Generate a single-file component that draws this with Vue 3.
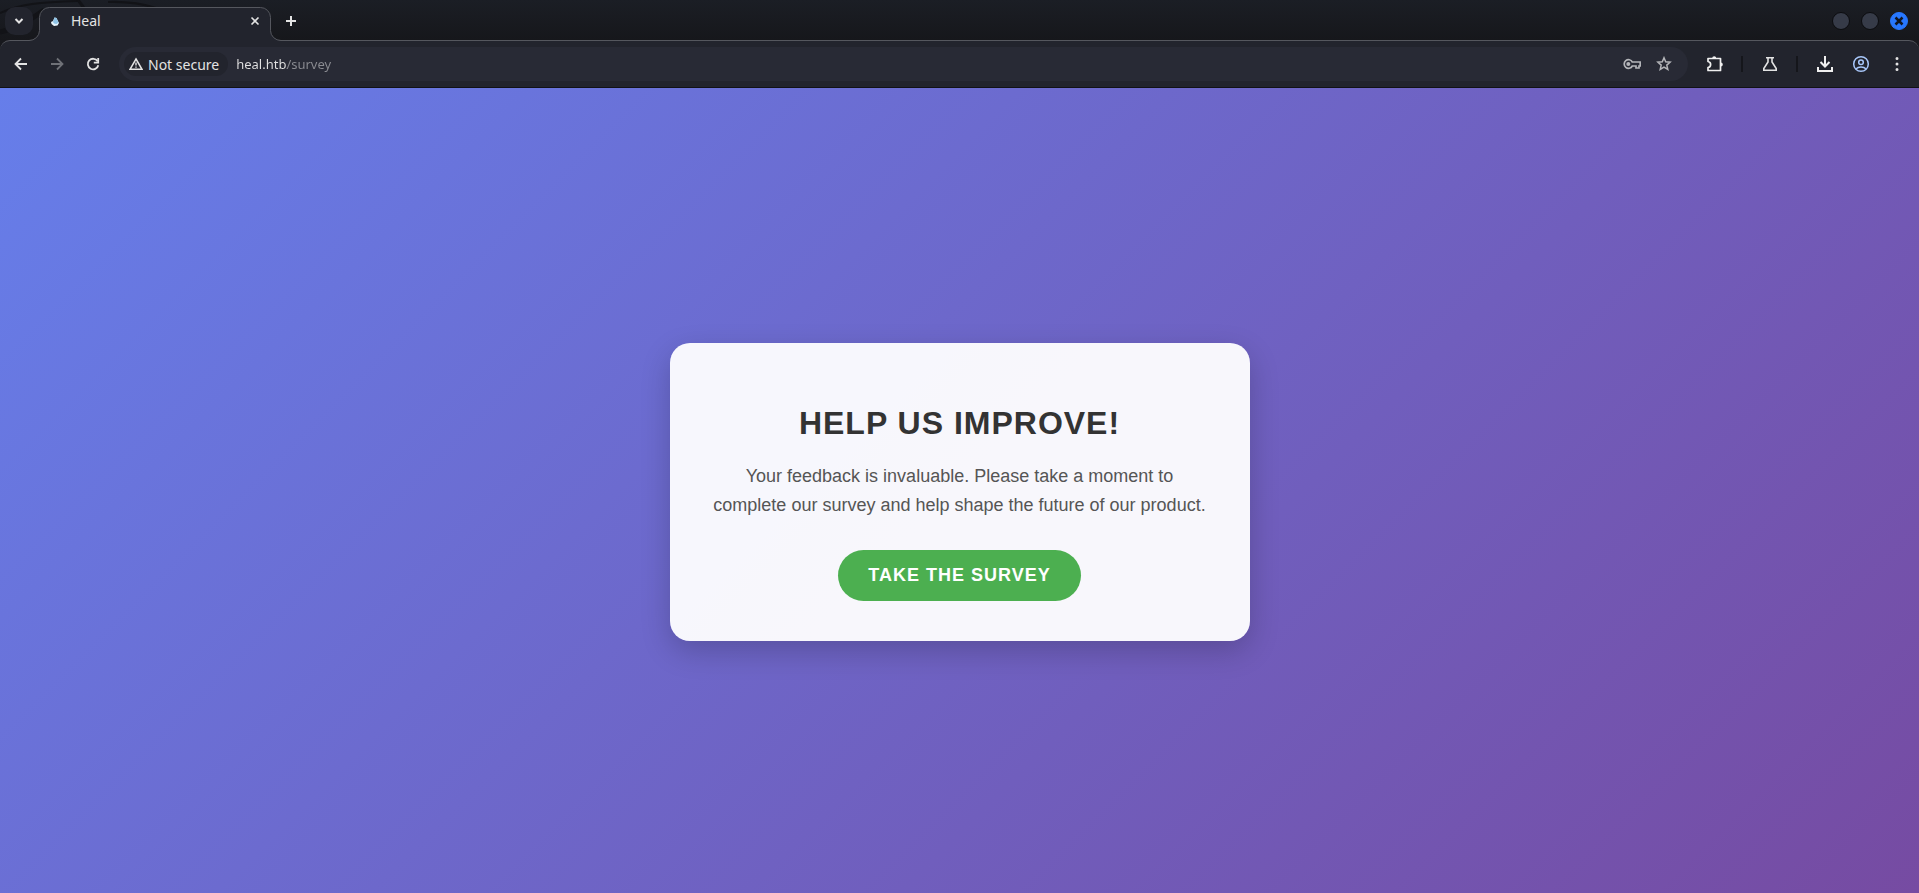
<script setup>
import { ref } from 'vue'

const url = ref('heal.htb/survey')
</script>

<template>
  <div class="window">
    <header class="titlebar">
      <svg class="pattern" width="180" height="40" viewBox="0 0 180 40" aria-hidden="true">
        <g fill="none" stroke="#121317">
          <path d="M0 32C18 28 30 20 44 10" stroke-width="5" />
          <path d="M0 13C20 4 40 2 78 1" stroke-width="2" />
          <path d="M78 0l6 8" stroke-width="3" />
          <path d="M108 2q26-1 48 6" stroke-width="2" />
        </g>
      </svg>
      <button class="tab-search" aria-label="Search tabs">
        <svg width="12" height="12" viewBox="0 0 12 12"><path d="M2.500 4l3.500 3.500L9.500 4" fill="none" stroke="#e3e3e3" stroke-width="2" /></svg>
      </button>
      <div class="tab">
        <svg class="tab-shape" width="252" height="34" viewBox="0 0 252 34" aria-hidden="true">
          <path d="M0 34V33.500A10.500 10 0 0 0 10.500 23.500V10.500A10 10 0 0 1 20.500 .5H231.500A10 10 0 0 1 241.500 10.500V23.500A10.500 10 0 0 0 252 33.500V34z" fill="#22242d" />
          <path d="M0 33.500A10.500 10 0 0 0 10.500 23.500V10.500A10 10 0 0 1 20.500 .5H231.500A10 10 0 0 1 241.500 10.500V23.500A10.500 10 0 0 0 252 33.500" fill="none" stroke="#55575e" />
        </svg>
        <svg class="favicon" width="16" height="16" viewBox="0 0 16 16" aria-hidden="true">
          <path d="M7.500 4.500L9.500 5l2.500 5-1.500 2.500L7 13l-2.500-2L4 9l2-1z" fill="#e6f4fc" />
          <path d="M7.500 4.500L9.500 5l2 4.500-2 1.500L7 10.500 6 9z" fill="#8fc3e6" />
        </svg>
        <span class="tab-title">Heal</span>
        <button class="icon-btn small" aria-label="Close tab">
          <svg width="10" height="10" viewBox="0 0 10 10"><path d="M1.500 1.500l7 7M8.500 1.500l-7 7" stroke="#e3e3e3" stroke-width="1.600" /></svg>
        </button>
      </div>
      <button class="icon-btn small" aria-label="New tab">
        <svg width="12" height="12" viewBox="0 0 12 12"><path d="M6 1v10M1 6h10" stroke="#e3e3e3" stroke-width="2" /></svg>
      </button>
      <div class="controls">
        <button class="control" aria-label="Minimize"></button>
        <button class="control" aria-label="Maximize"></button>
        <button class="control close" aria-label="Close">
          <svg width="10" height="10" viewBox="0 0 10 10"><path d="M1.500 1.500l7 7M8.500 1.500l-7 7" stroke="#11151f" stroke-width="2.500" /></svg>
        </button>
      </div>
    </header>

    <nav class="toolbar">
      <button class="icon-btn" aria-label="Back">
        <svg width="14" height="14" viewBox="0 0 14 14"><path d="M13 7H2M7 1.500L1.500 7 7 12.500" fill="none" stroke="#e3e3e3" stroke-width="1.800" /></svg>
      </button>
      <button class="icon-btn" aria-label="Forward">
        <svg width="14" height="14" viewBox="0 0 14 14"><path d="M1 7h11M7 1.500L12.500 7 7 12.500" fill="none" stroke="#6f7177" stroke-width="1.800" /></svg>
      </button>
      <button class="icon-btn" aria-label="Reload">
        <svg width="14" height="14" viewBox="0 0 14 14">
          <path d="M11.600 4.200A5.300 5.300 0 1 0 12.300 8.300" fill="none" stroke="#e3e3e3" stroke-width="1.800" />
          <path d="M12.200 1v4.600H7.800" fill="none" stroke="#e3e3e3" stroke-width="1.800" />
        </svg>
      </button>

      <div class="omnibox">
        <button class="chip">
          <svg width="14" height="14" viewBox="0 0 14 14">
            <path d="M7 2L13 12.300H1z" fill="none" stroke="#e3e3e3" stroke-width="1.500" />
            <path d="M7 5.500v3M7 9.500v1.300" stroke="#e3e3e3" stroke-width="1.400" />
          </svg>
          Not secure
        </button>
        <input v-model="url" class="address" type="text" aria-label="Address" />
        <button class="icon-btn" aria-label="Passwords">
          <svg width="18" height="12" viewBox="0 0 18 12">
            <path d="M9.300 4A4.300 4.300 0 1 0 9.300 8H13v2h3V8h1.200V4z" fill="none" stroke="#b4b5b9" stroke-width="1.700" />
            <circle cx="5.300" cy="6" r="2" fill="#b4b5b9" />
          </svg>
        </button>
        <button class="icon-btn" aria-label="Bookmark this page">
          <svg width="16" height="16" viewBox="0 0 16 16"><path d="M8 1.800l1.700 4 4.400.4-3.300 2.900 1 4.300L8 11.100l-3.800 2.300 1-4.300L1.900 6.200l4.400-.4z" fill="none" stroke="#b4b5b9" stroke-width="1.500" /></svg>
        </button>
      </div>

      <button class="icon-btn" aria-label="Extensions">
        <svg width="18" height="18" viewBox="0 0 18 18">
          <path d="M2 3.500H14.500V15.500H2V12.500C5.500 12 5.500 7 2 6.500z" fill="none" stroke="#f0f0f0" stroke-width="1.700" stroke-linejoin="round" />
          <path d="M6.200 3.200a2 2 0 0 1 4 0zM14.800 7.500a2 2 0 0 1 0 4z" fill="#f0f0f0" />
        </svg>
      </button>
      <span class="divider"></span>
      <button class="icon-btn" aria-label="Search labs">
        <svg width="16" height="16" viewBox="0 0 16 16"><path d="M4 1.700h8M6 1.700V6L1.800 12.600v1.600h12.400v-1.600L10 6V1.700" fill="none" stroke="#e3e3e3" stroke-width="1.600" /></svg>
      </button>
      <span class="divider"></span>
      <button class="icon-btn" aria-label="Downloads">
        <svg width="18" height="18" viewBox="0 0 18 18">
          <path d="M9 1v10M4.500 7L9 11.500 13.500 7" fill="none" stroke="#f0f0f0" stroke-width="2" />
          <path d="M2 12v4h14v-4" fill="none" stroke="#f0f0f0" stroke-width="2" />
        </svg>
      </button>
      <button class="icon-btn" aria-label="Profile">
        <svg width="18" height="18" viewBox="0 0 18 18">
          <g fill="none" stroke="#a8c7fa" stroke-width="1.500">
            <circle cx="9" cy="9" r="7.300" />
            <circle cx="9" cy="7.200" r="2.300" />
            <path d="M3.800 14c2.800-2.700 7.600-2.700 10.400 0" />
          </g>
        </svg>
      </button>
      <button class="icon-btn" aria-label="Menu">
        <svg width="4" height="16" viewBox="0 0 4 16"><path d="M2 2.500h0M2 8h0M2 13.500h0" stroke="#e3e3e3" stroke-width="3" stroke-linecap="round" /></svg>
      </button>
    </nav>

    <main class="page">
      <section class="card">
        <h1>Help us improve!</h1>
        <p>Your feedback is invaluable. Please take a moment to complete our survey and help shape the future of our product.</p>
        <button class="survey">Take the survey</button>
      </section>
    </main>
  </div>
</template>

<style>
body {
  margin: 0;
}
</style>

<style scoped>
.window {
  display: flex;
  flex-direction: column;
  min-height: 100vh;
  font-family: "Noto Sans", sans-serif;
  font-size: 14px;
  color: #e3e3e3;
  background: #17181d;
}
button {
  padding: 0;
  border: 0;
  background: none;
  font: inherit;
  color: inherit;
}
svg {
  display: block;
}
.titlebar {
  position: relative;
  display: flex;
  align-items: center;
  height: 40px;
  background: linear-gradient(#1b1e25, #16171b);
}
.pattern {
  position: absolute;
  top: 0;
  left: 0;
}
.tab-search {
  position: relative;
  z-index: 2;
  display: flex;
  align-items: center;
  justify-content: center;
  width: 28px;
  height: 28px;
  margin-left: 5px;
  margin-right: -4px;
  margin-top: 2px;
  border-radius: 10px;
  background: #22242d;
}
.tab {
  position: relative;
  z-index: 1;
  display: flex;
  align-items: center;
  box-sizing: border-box;
  width: 252px;
  height: 34px;
  padding: 0 16px 7px 18px;
  align-self: flex-end;
  margin-bottom: -1px;
}
.tab-shape {
  position: absolute;
  top: 0;
  left: 0;
}
.favicon,
.tab-title,
.tab .icon-btn {
  position: relative;
}
.tab-title {
  flex: 1;
  margin-left: 8px;
}
.icon-btn {
  display: flex;
  align-items: center;
  justify-content: center;
  flex: none;
  width: 28px;
  height: 28px;
}
.icon-btn.small {
  width: 20px;
  height: 20px;
}
.titlebar > .icon-btn {
  margin-top: 2px;
}
.controls {
  display: flex;
  gap: 11px;
  margin: 2px 11px 0 auto;
}
.control {
  display: flex;
  align-items: center;
  justify-content: center;
  box-sizing: border-box;
  width: 18px;
  height: 18px;
  border: 1px solid #0b0c0f;
  border-radius: 50%;
  background: #363b48;
}
.control.close {
  border-color: #2777ff;
  background: #2777ff;
}
.toolbar {
  display: flex;
  align-items: center;
  gap: 8px;
  box-sizing: border-box;
  height: 48px;
  padding: 0 8px 0 7px;
  border-top: 1px solid #55575e;
  border-bottom: 1px solid #111216;
  border-radius: 10px 10px 0 0;
  background: #22242d;
}
.omnibox {
  display: flex;
  align-items: center;
  gap: 4px;
  flex: 1;
  height: 34px;
  box-sizing: border-box;
  margin: 0 5px 0 4px;
  padding: 0 10px 0 5px;
  border-radius: 17px;
  background: #282a35;
}
.chip {
  display: flex;
  align-items: center;
  gap: 5px;
  height: 24px;
  padding: 0 9px 0 5px;
  border-radius: 12px;
  background: #22242d;
}
.address {
  flex: 1;
  min-width: 0;
  margin-left: 4px;
  padding: 0;
  border: 0;
  outline: 0;
  font: inherit;
  font-size: 13px;
  color: transparent;
  background: linear-gradient(to right, #e3e3e3 51px, #8b8c92 51px);
  background-clip: text;
  -webkit-background-clip: text;
}
.divider {
  width: 2px;
  height: 16px;
  margin: 0 5px 0 4px;
  background: #15161b;
}
.page {
  display: flex;
  align-items: center;
  justify-content: center;
  flex: 1;
  padding-top: 2px;
  font-family: "Liberation Sans", Arial, sans-serif;
  background: linear-gradient(135deg, #667eea, #764ba2);
}
.card {
  max-width: 500px;
  padding: 40px;
  border-radius: 20px;
  text-align: center;
  background: rgba(255, 255, 255, 0.95);
  box-shadow: 0 10px 30px rgba(0, 0, 0, 0.2);
}
h1 {
  margin: 22px 0 20px;
  font-size: 32px;
  letter-spacing: 1px;
  text-transform: uppercase;
  color: #333;
}
p {
  margin: 0 0 30px;
  font-size: 18px;
  line-height: 29px;
  color: #555;
}
.survey {
  padding: 15px 30px;
  border-radius: 50px;
  font-size: 18px;
  font-weight: bold;
  letter-spacing: 1px;
  line-height: 21px;
  text-transform: uppercase;
  color: #fff;
  background: #4caf50;
}
</style>
